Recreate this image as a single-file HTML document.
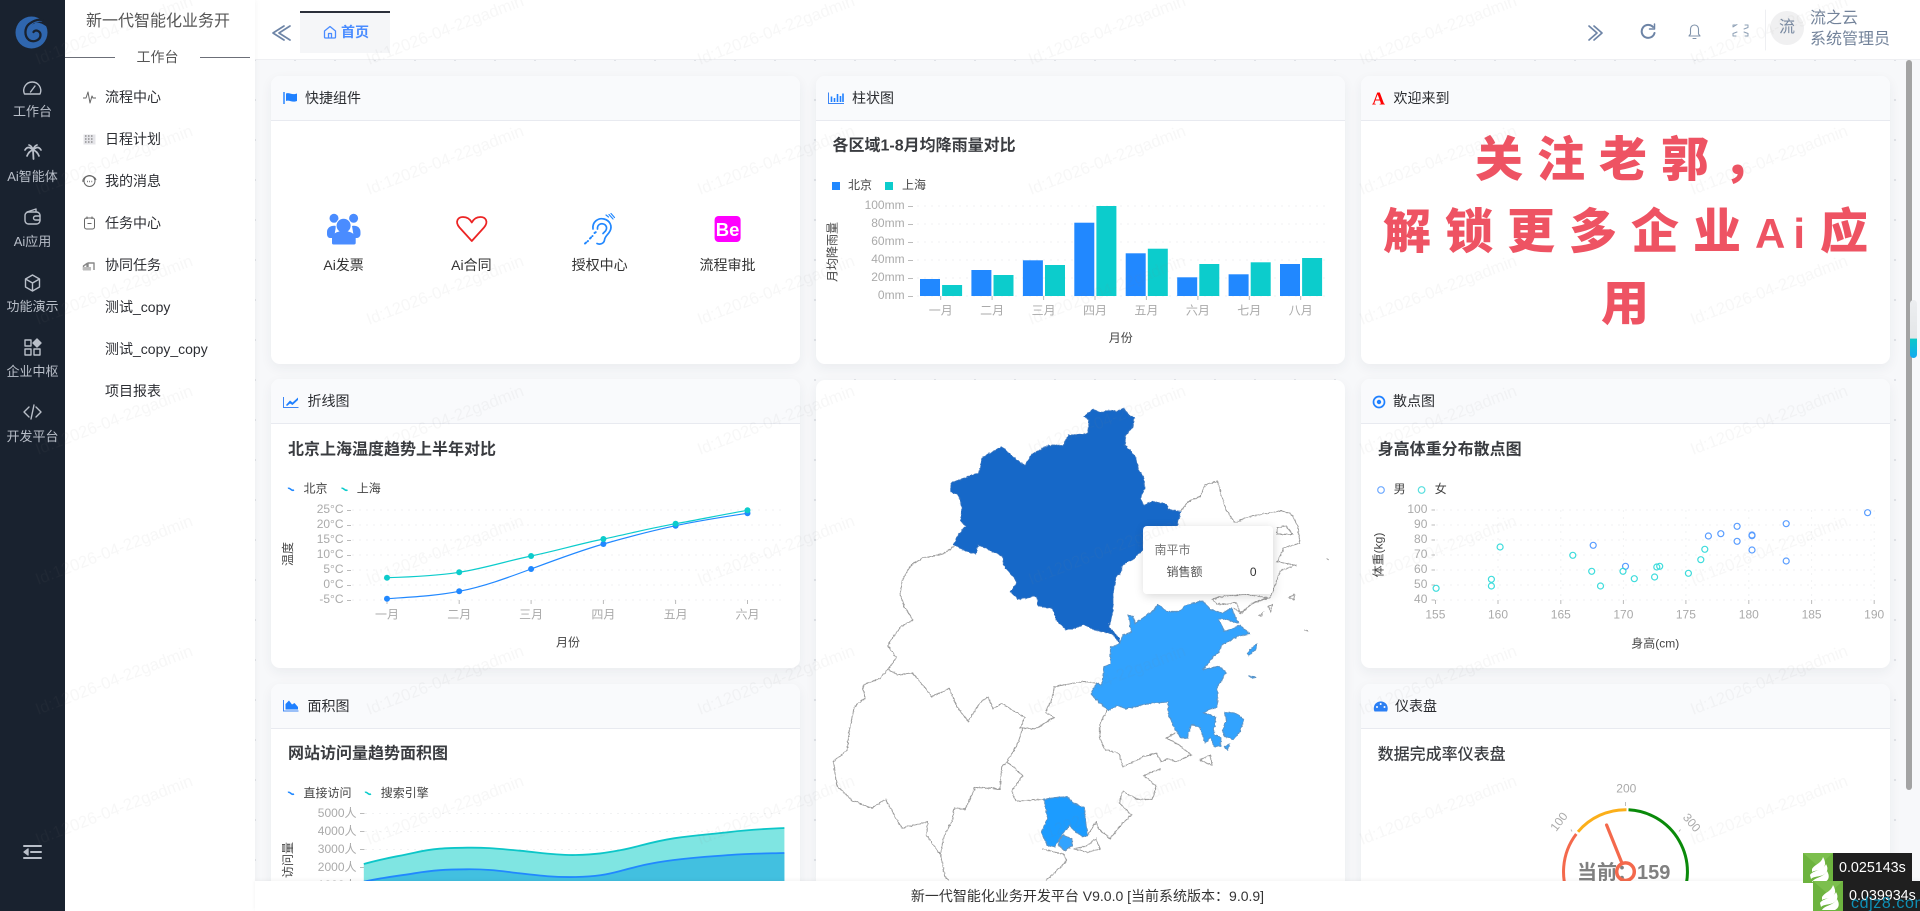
<!DOCTYPE html>
<html lang="zh-CN"><head><meta charset="utf-8"><title>工作台</title>
<style>
*{box-sizing:border-box}
html,body{margin:0;padding:0;width:1920px;height:911px;overflow:hidden}
body{position:relative;font-family:"Liberation Sans","Noto Sans CJK SC",sans-serif;background-color:#f7f8fa;background-image:radial-gradient(circle,#dfe1e6 1px,transparent 1.3px);background-size:40px 40px;background-position:-5px 0;color:#303133}
.abs{position:absolute}
#side{position:absolute;left:0;top:0;width:65px;height:911px;background:#19222f;color:#b9bfc9;font-size:13px;text-align:center;z-index:5}
#side .l{position:absolute;left:0;width:65px;line-height:18px;white-space:nowrap}
#sub{position:absolute;left:65px;top:0;width:190px;height:911px;background:#fff;z-index:4;box-shadow:1px 0 6px rgba(0,0,0,.04)}
#sub .i{position:absolute;left:40px;font-size:14px;line-height:20px;color:#2c2e33;white-space:nowrap}
#top{position:absolute;left:255px;top:0;width:1665px;height:60px;background:#fff;border-bottom:1px solid #eeeff2;z-index:3}
.card{position:absolute;width:529px;background:#fff;border-radius:9px;box-shadow:0 4px 12px rgba(40,50,70,.06);overflow:hidden}
.card .h{height:45px;background:#f9fafc;border-bottom:1px solid #e8eaf0;font-size:14px;line-height:44px;color:#2a2c30;white-space:nowrap}
#foot{position:absolute;left:255px;top:881px;width:1665px;height:30px;background:#fff;text-align:center;font-size:14px;line-height:30px;color:#333;z-index:6;box-shadow:0 -1px 4px rgba(0,0,0,.05)}
svg text{font-family:"Liberation Sans","Noto Sans CJK SC",sans-serif}
.y{font-size:12px;fill:#aaa;text-anchor:end;dominant-baseline:central}
.x{font-size:12px;fill:#aaa;text-anchor:middle;dominant-baseline:central}
.n{font-size:12px;fill:#444;text-anchor:middle;dominant-baseline:central}
.lg{font-size:12px;fill:#444;dominant-baseline:central}
.tt{font-size:16px;font-weight:700;fill:#3a3c40;dominant-baseline:central}
.ql{font-size:14px;fill:#333;text-anchor:middle;dominant-baseline:central}
.big{position:absolute;left:0;font-size:48px;font-weight:900;line-height:72px;color:#ee5363;letter-spacing:14px;white-space:nowrap}
.big span{font-size:42px}
.grid{stroke:#f1f2f3;stroke-width:1;stroke-dasharray:2 5;fill:none}
.tick{stroke:#bbb;stroke-width:1;fill:none}
.wm text{font-size:16.6px;fill:rgba(130,130,135,.065)}
.badge{position:absolute;height:30px;background:#1f1f1f;color:#fff;font-family:"Liberation Sans",sans-serif;font-size:14.3px;line-height:30px;white-space:nowrap;z-index:8}
</style></head><body>

<!-- left rail -->
<div id="side">
<svg class="abs" style="left:0;top:0" width="65" height="911" fill="none" stroke="#b9bfc9" stroke-width="1.4" stroke-linecap="round" stroke-linejoin="round">
 <circle cx="31.500" cy="32.500" r="16" fill="#2f66ae" stroke="none"/>
 <path d="M48 25 L42 20 C37 19 33 21 29 24 C24.500 28 24 36 29 40 C34 43 40.500 40 40.500 35 C40.500 31 35.500 29 33.500 32" stroke="#19222f" stroke-width="2.300"/>
 <path d="M44 22 C40 21 35 22 31 26 L34 23 C38 22 42 23 47 27 Z" fill="#19222f" stroke="none"/>
 <path d="M24.500 95 A8.5 8.5 0 1 1 40 95 Z" transform="translate(0,-1)"/><path d="M30.5 92 L35 86"/>
 <path d="M33 150 L33.500 159" stroke-width="1.800"/><path d="M33 150 Q28 145 25 150 M33 150 Q38 145 41 150 M33 150 Q29 151 27 156 M33 150 Q37 151 39 156 M33 150 Q32 146 29 145 M33 150 Q34 146 37 145" stroke-width="1.700"/>
 <rect x="25" y="212" width="15" height="12" rx="3.5"/><path d="M27 212 L36 209 V212 M40 216 H35.5 A2 2 0 0 0 35.5 220 H40"/>
 <path d="M32.5 275 L39.5 279 V287 L32.5 291 L25.5 287 V279 Z M25.5 279 L32.5 283 L39.5 279 M32.5 283 V291"/>
 <rect x="25" y="340" width="6" height="6"/><rect x="25" y="349" width="6" height="6"/><rect x="34" y="349" width="6" height="6"/><path d="M37 339 L41 343 L37 347 L33 343 Z" fill="#b9bfc9"/>
 <path d="M29 407 L24 412 L29 417 M36 407 L41 412 L36 417 M34 405 L31 419"/>
 <path d="M24 846 H41 M31 852 H41 M24 858 H41" stroke-width="2"/><path d="M28 849 L24 852 L28 855 Z" fill="#b9bfc9"/>
</svg>
<div class="l" style="top:103px">工作台</div>
<div class="l" style="top:168px">Ai智能体</div>
<div class="l" style="top:233px">Ai应用</div>
<div class="l" style="top:298px">功能演示</div>
<div class="l" style="top:363px">企业中枢</div>
<div class="l" style="top:428px">开发平台</div>
</div>

<!-- sub menu -->
<div id="sub">
<div class="abs" style="left:21px;top:10px;font-size:16px;line-height:24px;color:#555;white-space:nowrap">新一代智能化业务开</div>
<div class="abs" style="left:0;top:57px;width:50px;height:1px;background:#6c6f78"></div>
<div class="abs" style="left:135px;top:57px;width:50px;height:1px;background:#6c6f78"></div>
<div class="abs" style="left:50px;width:85px;top:47px;text-align:center;font-size:14px;line-height:20px;color:#555">工作台</div>
<div class="i" style="top:87px">流程中心</div>
<div class="i" style="top:129px">日程计划</div>
<div class="i" style="top:171px">我的消息</div>
<div class="i" style="top:213px">任务中心</div>
<div class="i" style="top:255px">协同任务</div>
<div class="i" style="top:297px">测试_copy</div>
<div class="i" style="top:339px">测试_copy_copy</div>
<div class="i" style="top:381px">项目报表</div>
<svg class="abs" style="left:0;top:0" width="60" height="300" fill="none" stroke="#666" stroke-width="1" stroke-linejoin="round">
 <path d="M18 98 H21 L23 92 L25 103 L27 96 L28 98 H31"/>
 <rect x="18.5" y="134.5" width="12" height="10" fill="#e4e4e8" stroke="none"/><path d="M20 136 H29 M20 139 H29 M20 142 H29" stroke-dasharray="1.5 1.5"/>
 <circle cx="24.5" cy="181" r="5.5"/><path d="M18 182 A6.5 5 0 0 1 31 180"/><path d="M22 181.5 H22.8 M24.2 181.5 H25 M26.4 181.5 H27.2" stroke-width="1.4"/>
 <rect x="19.5" y="218" width="10" height="11" rx="2"/><path d="M22 216.5 V219 M27 216.5 V219 M22.5 223.5 H26.5"/>
 <path d="M18.5 270 V266 L22 263.5 V270 M23 270 V263 H29 V270" stroke="#888" stroke-width="1.4"/><rect x="18" y="267" width="8" height="3.5" fill="#bbb" stroke="none"/>
</svg>
</div>

<!-- top bar -->
<div id="top">
<div class="abs" style="left:45px;top:11px;width:90px;height:42px;background:#f5f6f8;border-top:2px solid #2b2f3a"></div>
<div class="abs" style="left:86px;top:22px;font-size:14px;font-weight:700;line-height:20px;color:#4a8cff">首页</div>
<svg class="abs" style="left:0;top:0" width="1665" height="60" fill="none" stroke="#6d84a6" stroke-width="1.7" stroke-linecap="round" stroke-linejoin="round">
 <path d="M31 26 L20 33 L31 40" transform="translate(-2,0)" /><path d="M37 26 L26 33 L37 40" transform="translate(-2,0)"/>
 <path d="M69.500 31 L75 26.500 L80.500 31 V37 A1 1 0 0 1 79.500 38 H70.500 A1 1 0 0 1 69.500 37 Z M73.500 38 V33.500 H76.500 V38" stroke="#4a8cff" stroke-width="1.3"/>
 <path d="M1334 26 L1342 33 L1334 40 M1339 26 L1347 33 L1339 40"/>
 <path d="M1398 27 A6.500 6.500 0 1 0 1399.500 33" stroke-width="2"/><path d="M1399.500 24 V29 H1394.500" stroke-width="1.500"/>
 <path d="M1434 36 H1445 L1443.500 34 V29 A4 4 0 0 0 1435.500 29 V34 Z M1438 38.500 H1441" stroke-width="1.100" stroke="#8093ab"/>
 <path transform="translate(-2,0)" d="M1480 27 L1484 24.500 M1480 27 V25 M1480 25 H1483 M1495 25 H1492 M1495 25 V27.500 L1491 29 M1480 36 V33.500 L1484 32 M1480 36 H1483 M1495 36 H1492 M1495 36 V33.500 L1491 32" stroke-width="1" stroke="#8ea0b6"/>
 <path d="M1510.500 10 V50" stroke="#eeeff2" stroke-width="1"/>
</svg>
<div class="abs" style="left:1515px;top:11px;width:34px;height:34px;border-radius:50%;background:#f0f0f1;color:#7788a0;font-size:16px;line-height:34px;text-align:center">流</div>
<div class="abs" style="left:1555px;top:9px;font-size:16px;line-height:20.500px;color:#73839a;white-space:nowrap">流之云<br>系统管理员</div>
</div>

<!-- cards -->
<div class="card" style="left:271px;top:76px;height:288px"><div class="h" style="padding-left:34px">快捷组件</div></div>
<div class="card" style="left:816px;top:76px;height:288px"><div class="h" style="padding-left:36px">柱状图</div></div>
<div class="card" style="left:1361px;top:76px;height:288px"><div class="h" style="padding-left:32.500px">欢迎来到</div>
 <div class="big" style="top:49px;left:114px">关注老郭，</div>
 <div class="big" style="top:121px;left:22px">解锁更多企业<span style="letter-spacing:8px">A</span><span style="letter-spacing:15px">i</span>应</div>
 <div class="big" style="top:193px;left:240px">用</div>
</div>
<div class="card" style="left:271px;top:379px;height:289px"><div class="h" style="padding-left:36.500px">折线图</div></div>
<div class="card" style="left:271px;top:684px;height:227px"><div class="h" style="padding-left:36.500px">面积图</div></div>
<div class="card" style="left:816px;top:379.500px;height:531px"></div>
<div class="card" style="left:1361px;top:379px;height:289px"><div class="h" style="padding-left:32px">散点图</div></div>
<div class="card" style="left:1361px;top:684px;height:227px"><div class="h" style="padding-left:34px">仪表盘</div></div>

<!-- map -->
<svg class="abs" style="left:810px;top:375px" width="550" height="536" viewBox="0 0 1568 1568" preserveAspectRatio="none">
<defs><filter id="j" x="-3%" y="-3%" width="106%" height="106%"><feTurbulence type="turbulence" baseFrequency=".07" numOctaves="2" seed="5"/><feDisplacementMap in="SourceGraphic" scale="6" xChannelSelector="R" yChannelSelector="G"/></filter></defs>
<g filter="url(#j)" fill="none" stroke="#9c9c9c" stroke-width="1">
 <path vector-effect="non-scaling-stroke" d="M1055 398 L1075 370 L1110 355 L1125 320 L1160 310 L1170 345 L1185 395 L1210 430 L1260 410 L1300 405 L1340 395 L1370 405 L1390 440 L1395 490 L1350 505 L1330 545 L1385 555 L1340 570 L1310 650 L1260 665 L1230 695 L1205 680"/>
 <path vector-effect="non-scaling-stroke" d="M1330 445 L1355 440 L1375 465 L1330 465 Z M1145 655 L1185 645 L1240 640 L1300 650 L1255 670 L1225 695 L1215 665 L1160 670 Z M1280 700 L1290 695 L1285 705 Z M1305 675 L1318 670 L1312 690 Z M1365 650 L1380 640 L1378 655 Z M1470 534 L1478 540 M1408 745 L1418 748"/>
 <path vector-effect="non-scaling-stroke" d="M410 500 L380 520 L320 535 L290 550 L265 590 L255 640 L270 680 L292 715 L255 735 L220 790 L245 825 L220 860 L250 875 L290 870 L320 905 L345 940 L395 915 L415 965 L450 1012 L480 960 L505 940 L520 975 L545 960 L585 985 L612 1000 L598 1030 L640 1035 L695 1000 L670 985 L690 945 L695 910 L780 895 L815 900"/>
 <path vector-effect="non-scaling-stroke" d="M220 860 L200 885 L150 905 L155 945 L125 970 L110 1040 L105 1095 L65 1130 L75 1200 L120 1245 L175 1265 L215 1240 L260 1325 L335 1305 L330 1345 L370 1400 L380 1350 L405 1300 L410 1265 L440 1270 L470 1205 L540 1210 L545 1145 L560 1130 L590 1080 L605 1030"/>
 <path vector-effect="non-scaling-stroke" d="M845 980 L825 1020 L825 1060 L840 1095 L880 1105 L890 1145 L950 1115 L985 1105 L1000 1130 L1020 1120 L1040 1130 L1085 1110 L1050 1080 L1015 1060 L1040 1045"/>
 <path vector-effect="non-scaling-stroke" d="M560 1130 L605 1170 L575 1215 L585 1245 L665 1240"/>
 <path vector-effect="non-scaling-stroke" d="M790 1345 L815 1305 L820 1325 L855 1355 L880 1320 L915 1285 L880 1250 L890 1215 L930 1240 L975 1240 L985 1200 L950 1170 L1000 1150"/>
 <path vector-effect="non-scaling-stroke" d="M370 1400 L385 1470 L395 1478 M660 1385 L720 1400 L730 1420 L680 1470 L670 1478 M750 1385 L790 1375 L815 1355 L825 1385 L790 1395 Z M1110 1125 L1140 1110 L1145 1140 Z"/>
 <path vector-effect="non-scaling-stroke" fill="#1368c8" stroke="#2f6fbf" d="M780 120 L805 100 L830 108 L850 103 L875 105 L893 95 L905 115 L923 122 L918 150 L897 175 L897 205 L925 235 L935 275 L950 300 L952 330 L940 360 L950 380 L975 368 L1015 378 L1020 392 L1055 398 L1045 440 L1000 445 L948 445 L948 510 L915 540 L888 555 L885 578 L870 590 L862 640 L862 690 L850 735 L880 770 L880 782 L860 755 L815 745 L780 730 L730 745 L700 715 L690 680 L650 675 L645 645 L592 655 L570 632 L590 605 L550 555 L548 530 L520 515 L478 495 L472 522 L445 515 L410 495 L420 470 L443 440 L428 425 L432 385 L422 350 L400 340 L400 315 L425 305 L480 285 L490 240 L545 208 L610 265 L630 230 L680 205 L720 205 L735 175 L790 170 L795 130 Z"/>
 <path vector-effect="non-scaling-stroke" fill="#33a3fe" stroke="#5b93c4" d="M905 700 L920 705 L925 725 L975 690 L990 670 L1015 690 L1050 690 L1075 670 L1120 660 L1140 685 L1175 695 L1200 680 L1220 725 L1170 710 L1165 715 L1180 750 L1225 730 L1250 755 L1215 765 L1170 790 L1165 810 L1150 820 L1120 860 L1165 850 L1185 870 L1160 910 L1160 970 L1145 975 L1120 985 L1155 1000 L1150 1050 L1170 1060 L1170 1085 L1150 1085 L1140 1060 L1125 1075 L1110 1030 L1085 1020 L1075 1060 L1055 1060 L1040 1035 L1020 990 L1020 955 L960 960 L900 975 L875 965 L850 980 L825 960 L800 930 L815 900 L830 905 L838 850 L855 845 L855 795 L880 785 L890 760 L915 750 Z"/>
 <path vector-effect="non-scaling-stroke" fill="#33a3fe" stroke="#5b93c4" d="M1180 985 L1205 985 L1235 1005 L1225 1040 L1205 1065 L1180 1055 L1175 1035 L1185 1010 Z M1260 795 L1272 785 L1270 800 L1250 820 L1245 812 Z M1248 878 L1268 882 L1260 886 Z M1180 1085 L1195 1078 L1190 1096 Z"/>
 <path vector-effect="non-scaling-stroke" fill="#1e9cff" stroke="#5b93c4" d="M665 1240 L695 1235 L730 1232 L750 1250 L780 1265 L785 1310 L790 1345 L775 1350 L750 1330 L740 1315 L720 1340 L695 1380 L675 1375 L658 1335 L675 1300 L672 1270 Z"/>
 <path vector-effect="non-scaling-stroke" fill="#33a3fe" stroke="#6f93b5" d="M722 1345 L745 1355 L747 1375 L725 1390 L708 1375 L708 1358 Z"/>
</g>
</svg>
<div class="abs" style="left:1142.500px;top:526px;width:130px;height:68px;background:rgba(255,255,255,.97);border-radius:4px;box-shadow:1px 2px 10px rgba(0,0,0,.16);z-index:2">
 <div class="abs" style="left:12px;top:15px;font-size:12px;line-height:18px;color:#777">南平市</div>
 <div class="abs" style="left:24px;top:37px;font-size:12px;line-height:18px;color:#555">销售额</div>
 <div class="abs" style="right:16px;top:37px;font-size:12px;line-height:18px;color:#333">0</div>
</div>

<!-- charts and icons -->
<svg class="abs" style="left:0;top:0;z-index:1" width="1920" height="911">
<!-- header icons -->
<path d="M284 92 V104" stroke="#2a86ff" stroke-width="1.500"/><path d="M286 93.500 C289 92 292 95.500 297 93.500 V101 C292 103 289 99.500 286 101 Z" fill="#1f80ff"/>
<path d="M828.500 92.500 V103.500 H844" stroke="#3d86f5" fill="none"/><path d="M831.500 96.500 V102 M834.500 98 V102 M837.500 94 V102 M840.500 96 V102 M843 93.500 V102" stroke="#1f80ff" stroke-width="1.600"/>
<text x="1372" y="104.500" style="font-family:'Liberation Serif',serif;font-size:18px;font-weight:700" fill="#f00">A</text>
<path d="M283.500 397 V407.500 H298.500" stroke="#3d86f5" fill="none"/><path d="M286 405 L290 400.500 L292.500 402.500 L298 397.500 L298 400 L292.500 405 L290 403.500 L287 406 Z" fill="#1f80ff"/>
<path d="M283.500 700 V711 H298.500" stroke="#3d86f5" fill="none"/><path d="M285.500 709.500 V704 L289 700.500 L292 704.500 L294.500 703 L298 707 V709.500 Z" fill="#1f80ff"/>
<circle cx="1379" cy="402" r="5.500" fill="none" stroke="#1f80ff" stroke-width="1.700"/><circle cx="1379" cy="402" r="2.200" fill="#1f80ff"/>
<path d="M1374.500 711.500 A7 7 0 1 1 1387 711.500 Z" fill="#2a7ff5"/><circle cx="1377" cy="707" r="1" fill="#fff"/><circle cx="1380.700" cy="704" r="1" fill="#fff"/><circle cx="1384.500" cy="707" r="1" fill="#fff"/>

<!-- quick icons -->
<g fill="#4a8cff"><circle cx="334" cy="218.300" r="4.500"/><circle cx="353.600" cy="218.300" r="4.500"/><path d="M327 232 C327 227 332 225 336 226 L334 238 H330 C328 238 327 236 327 234 Z M360.500 232 C360.500 227 356 225 352 226 L354 238 H357 C359 238 360.500 236 360.500 234 Z"/><circle cx="343.600" cy="225.700" r="7.500" stroke="#fff"/><path d="M332 243 V238 C332 234 337 231 343.700 231 C350 231 355.700 234 355.700 238 V243 C355.700 244 355 244.500 354 244.500 H333.500 C332.500 244.500 332 244 332 243 Z"/></g>
<path d="M471.800 241 L459.500 227.500 C454.500 221.500 458 217 463 217 C467 217 470 219 471.800 222.500 C473.600 219 476.500 217 480.500 217 C485.500 217 489 221.500 484 227.500 Z" fill="none" stroke="#ec2424" stroke-width="1.800" stroke-linejoin="round"/>
<g fill="none" stroke="#2288ff" stroke-width="1.700" stroke-linecap="round"><path d="M593 229 C592 222 598 217.500 604 219 C610 220.500 612.500 226 610 231 C608 235 605 236 604.500 240 C604 243.500 600 245 597 243.500"/><path d="M597.500 229 C597 225 600.500 223 603.500 224 C606.500 225 607.500 228 605.500 231 L603 233.500"/><path d="M606 215 L608.500 217 M609 214.500 L613 219 M611 213.500 L614.500 217.500" stroke-width="1.200"/><path d="M585 243.500 L588 241 M590 238.500 L592.500 236 M594.500 233 L596 232" stroke-width="2" stroke-dasharray="1.500 2"/></g>
<rect x="714.600" y="216" width="26" height="26" rx="4" fill="#ff00ff"/><text x="727.600" y="229.500" text-anchor="middle" dominant-baseline="central" style="font-size:18.500px;font-weight:700" fill="#fff">Be</text>
<text class="ql" x="343.600" y="265">Ai发票</text><text class="ql" x="471.400" y="265">Ai合同</text><text class="ql" x="599.600" y="265">授权中心</text><text class="ql" x="727.500" y="265">流程审批</text>

<!-- bar -->
<text class="tt" x="832.500" y="146">各区域1-8月均降雨量对比</text>
<rect x="832" y="182" width="8" height="8" fill="#2188ff"/><text class="lg" x="848" y="185">北京</text>
<rect x="885" y="182" width="8" height="8" fill="#0ccccc"/><text class="lg" x="902" y="185">上海</text>
<path class="grid" d="M917 206 H1330 M917 224 H1330 M917 242 H1330 M917 260 H1330 M917 278 H1330 M917 296 H1330"/>
<path class="tick" d="M908 206.500 H913 M908 224.500 H913 M908 242.500 H913 M908 260.500 H913 M908 278.500 H913 M908 296.500 H913 M940.700 296 V300 M992.100 296 V300 M1043.600 296 V300 M1095 296 V300 M1146.400 296 V300 M1197.900 296 V300 M1249.300 296 V300 M1300.700 296 V300"/>
<text class="y" x="904.600" y="205">100mm</text><text class="y" x="904.600" y="223">80mm</text><text class="y" x="904.600" y="241">60mm</text><text class="y" x="904.600" y="259">40mm</text><text class="y" x="904.600" y="277">20mm</text><text class="y" x="904.600" y="295">0mm</text>
<g fill="#2188ff"><rect x="920" y="279" width="20" height="17"/><rect x="971.400" y="270" width="20" height="26"/><rect x="1022.900" y="260.300" width="20" height="35.700"/><rect x="1074.300" y="222.700" width="20" height="73.300"/><rect x="1125.700" y="253.300" width="20" height="42.700"/><rect x="1177.200" y="277.300" width="20" height="18.700"/><rect x="1228.600" y="274.300" width="20" height="21.700"/><rect x="1280" y="264" width="20" height="32"/></g>
<g fill="#0ccccc"><rect x="942.100" y="285" width="20" height="11"/><rect x="993.500" y="275" width="20" height="21"/><rect x="1045" y="265" width="20" height="31"/><rect x="1096.400" y="206" width="20" height="90"/><rect x="1147.800" y="248.700" width="20" height="47.300"/><rect x="1199.300" y="264" width="20" height="32"/><rect x="1250.700" y="262.300" width="20" height="33.700"/><rect x="1302.100" y="258" width="20" height="38"/></g>
<g class="xg"><text class="x" x="940.700" y="310.700">一月</text><text class="x" x="992.100" y="310.700">二月</text><text class="x" x="1043.600" y="310.700">三月</text><text class="x" x="1095" y="310.700">四月</text><text class="x" x="1146.400" y="310.700">五月</text><text class="x" x="1197.900" y="310.700">六月</text><text class="x" x="1249.300" y="310.700">七月</text><text class="x" x="1300.700" y="310.700">八月</text></g>
<text class="n" x="1120.700" y="338">月份</text><text class="n" transform="rotate(-90 832.500 252)" x="832.500" y="252">月均降雨量</text>

<!-- line -->
<text class="tt" x="288" y="450">北京上海温度趋势上半年对比</text>
<path d="M288 488.500 C290 487 291 491.500 294 490" fill="none" stroke="#2188ff" stroke-width="1.600"/><text class="lg" x="303.500" y="488.700">北京</text>
<path d="M341.500 488.500 C343.500 487 344.500 491.500 347.500 490" fill="none" stroke="#0ccccc" stroke-width="1.600"/><text class="lg" x="356.800" y="488.700">上海</text>
<path class="grid" d="M352 510 H783 M352 525 H783 M352 540 H783 M352 555 H783 M352 570 H783 M352 585 H783 M352 600 H783"/>
<path class="tick" d="M347 510.500 H351 M347 525.500 H351 M347 540.500 H351 M347 555.500 H351 M347 570.500 H351 M347 585.500 H351 M347 600.500 H351 M387 600 V604 M459.200 600 V604 M531.100 600 V604 M603.400 600 V604 M675.600 600 V604 M747.500 600 V604"/>
<text class="y" x="343.500" y="509">25°C</text><text class="y" x="343.500" y="524">20°C</text><text class="y" x="343.500" y="539">15°C</text><text class="y" x="343.500" y="554">10°C</text><text class="y" x="343.500" y="569">5°C</text><text class="y" x="343.500" y="584">0°C</text><text class="y" x="343.500" y="599">-5°C</text>
<path d="M387 598.700 C411 597,435 596,459.200 591.300 S507 578,531.100 569 S579 551,603.400 544 S651 531,675.600 525.700 S723 517,747.500 513.300" fill="none" stroke="#2188ff" stroke-width="1.200"/>
<path d="M387 577.700 C411 577,435 576,459.200 572.300 S507 561,531.100 556 S579 544,603.400 539 S651 528,675.600 523.700 S723 514.500,747.500 510.300" fill="none" stroke="#0ccccc" stroke-width="1.200"/>
<g fill="#2188ff"><circle cx="387" cy="598.700" r="3"/><circle cx="459.200" cy="591.300" r="3"/><circle cx="531.100" cy="569" r="3"/><circle cx="603.400" cy="544" r="3"/><circle cx="675.600" cy="525.700" r="3"/><circle cx="747.500" cy="513.300" r="3"/></g>
<g fill="#0ccccc"><circle cx="387" cy="577.700" r="3"/><circle cx="459.200" cy="572.300" r="3"/><circle cx="531.100" cy="556" r="3"/><circle cx="603.400" cy="539" r="3"/><circle cx="675.600" cy="523.700" r="3"/><circle cx="747.500" cy="510.300" r="3"/></g>
<text class="x" x="387" y="614.300">一月</text><text class="x" x="459.200" y="614.300">二月</text><text class="x" x="531.100" y="614.300">三月</text><text class="x" x="603.400" y="614.300">四月</text><text class="x" x="675.600" y="614.300">五月</text><text class="x" x="747.500" y="614.300">六月</text>
<text class="n" x="568" y="642.300">月份</text><text class="n" transform="rotate(-90 288 554)" x="288" y="554">温度</text>

<!-- area -->
<text class="tt" x="288" y="754">网站访问量趋势面积图</text>
<path d="M288 792.500 C290 791 291 795.500 294 794" fill="none" stroke="#2188ff" stroke-width="1.600"/><text class="lg" x="303.500" y="793">直接访问</text>
<path d="M365 792.500 C367 791 368 795.500 371 794" fill="none" stroke="#0ccccc" stroke-width="1.600"/><text class="lg" x="380.700" y="793">搜索引擎</text>
<path class="grid" d="M365 813.500 H784 M365 831.500 H784 M365 849.500 H784"/>
<path class="tick" d="M360 813.500 H364.500 M360 831.500 H364.500 M360 849.500 H364.500 M360 867.500 H364.500"/>
<text class="y" x="356.500" y="813">5000人</text><text class="y" x="356.500" y="831">4000人</text><text class="y" x="356.500" y="849">3000人</text><text class="y" x="356.500" y="867">2000人</text><text class="y" x="356.500" y="885">1000人</text>
<path d="M363.800 864 C385 858,395 857,414.300 852.700 S445 848,467 847.700 S500 849,519.600 850.700 S555 855.500,575.700 855 S605 853,621.300 850 S650 842,673.900 838.300 S710 834.500,730 832 S765 829,784.400 828 V900 H363.800 Z" fill="#7fe5e2"/>
<path d="M363.800 881.700 C385 877,395 876.500,414.300 873.300 S445 869.500,467 869.300 S500 871,519.600 873.300 S555 877.500,575.700 877 S605 875,621.300 870.700 S650 863,673.900 860 S710 856.500,730 855 S765 853.500,784.400 853 V900 H363.800 Z" fill="#42c0e0"/>
<path d="M363.800 864 C385 858,395 857,414.300 852.700 S445 848,467 847.700 S500 849,519.600 850.700 S555 855.500,575.700 855 S605 853,621.300 850 S650 842,673.900 838.300 S710 834.500,730 832 S765 829,784.400 828" fill="none" stroke="#0cc6c8" stroke-width="1.800"/>
<path d="M363.800 881.700 C385 877,395 876.500,414.300 873.300 S445 869.500,467 869.300 S500 871,519.600 873.300 S555 877.500,575.700 877 S605 875,621.300 870.700 S650 863,673.900 860 S710 856.500,730 855 S765 853.500,784.400 853" fill="none" stroke="#2188ff" stroke-width="1.800"/>
<text class="n" transform="rotate(-90 288 860)" x="288" y="860">访问量</text>

<!-- scatter -->
<text class="tt" x="1377.600" y="450">身高体重分布散点图</text>
<circle cx="1381" cy="490" r="3.300" fill="none" stroke="#6faaff" stroke-width="1.200"/><text class="lg" x="1393.600" y="489">男</text>
<circle cx="1421.600" cy="490" r="3.300" fill="none" stroke="#58dfdf" stroke-width="1.200"/><text class="lg" x="1434.700" y="489">女</text>
<path class="grid" d="M1436 510 H1875 M1436 525 H1875 M1436 540 H1875 M1436 555 H1875 M1436 570 H1875 M1436 585 H1875 M1436 600 H1875 M1498 510 V600 M1560.800 510 V600 M1623.400 510 V600 M1685.900 510 V600 M1748.800 510 V600 M1811.600 510 V600 M1874.200 510 V600"/>
<path class="tick" d="M1431.500 510 H1435 M1431.500 525 H1435 M1431.500 540 H1435 M1431.500 555 H1435 M1431.500 570 H1435 M1431.500 585 H1435 M1431.500 600 H1435 M1435.500 600 V604 M1498 600 V604 M1560.800 600 V604 M1623.400 600 V604 M1685.900 600 V604 M1748.800 600 V604 M1811.600 600 V604 M1874.200 600 V604"/>
<text class="y" x="1427.400" y="509">100</text><text class="y" x="1427.400" y="524">90</text><text class="y" x="1427.400" y="539">80</text><text class="y" x="1427.400" y="554">70</text><text class="y" x="1427.400" y="569">60</text><text class="y" x="1427.400" y="584">50</text><text class="y" x="1427.400" y="599">40</text>
<text class="x" x="1435.400" y="614.700">155</text><text class="x" x="1498" y="614.700">160</text><text class="x" x="1560.800" y="614.700">165</text><text class="x" x="1623.400" y="614.700">170</text><text class="x" x="1685.900" y="614.700">175</text><text class="x" x="1748.800" y="614.700">180</text><text class="x" x="1811.600" y="614.700">185</text><text class="x" x="1874.200" y="614.700">190</text>
<text class="n" x="1655.300" y="643.300">身高(cm)</text><text class="n" transform="rotate(-90 1378.400 555)" x="1378.400" y="555">体重(kg)</text>
<g fill="none" stroke="#3d8cff" stroke-width="1.200" opacity=".85"><circle cx="1593.200" cy="545.300" r="3"/><circle cx="1625.500" cy="566.300" r="3"/><circle cx="1708.400" cy="536" r="3"/><circle cx="1720.800" cy="533.700" r="3"/><circle cx="1737.100" cy="526.300" r="3"/><circle cx="1737.100" cy="541.300" r="3"/><circle cx="1752" cy="535" r="3"/><circle cx="1752" cy="535.700" r="3"/><circle cx="1752" cy="550" r="3"/><circle cx="1786.200" cy="523.700" r="3"/><circle cx="1786.200" cy="561" r="3"/><circle cx="1867.600" cy="512.700" r="3"/></g>
<g fill="none" stroke="#1cd6d6" stroke-width="1.200" opacity=".85"><circle cx="1436.100" cy="588.300" r="3"/><circle cx="1491.400" cy="579.300" r="3"/><circle cx="1491.400" cy="586" r="3"/><circle cx="1500.100" cy="547" r="3"/><circle cx="1572.800" cy="555.300" r="3"/><circle cx="1591.700" cy="571.300" r="3"/><circle cx="1600.500" cy="586" r="3"/><circle cx="1623" cy="571.300" r="3"/><circle cx="1634.300" cy="578.700" r="3"/><circle cx="1654.600" cy="577" r="3"/><circle cx="1656.800" cy="567" r="3"/><circle cx="1659.700" cy="566.300" r="3"/><circle cx="1688.400" cy="573.300" r="3"/><circle cx="1700.800" cy="559.700" r="3"/><circle cx="1704.800" cy="549.300" r="3"/></g>

<!-- gauge -->
<text class="tt" style="font-weight:500" x="1377.600" y="755">数据完成率仪表盘</text>
<text class="x" x="1626.300" y="788.300">200</text>
<text class="x" transform="rotate(-53 1559 821.700)" x="1559" y="821.700">100</text>
<text class="x" transform="rotate(50 1691.700 822.700)" x="1691.700" y="822.700">300</text>
<path class="tick" d="M1625.500 802 V806 M1571 829.500 L1572 831.500 M1680.500 829.500 L1679 831.500"/>
<path d="M1576.300 834 A62 62 0 0 0 1570.800 900.800" fill="none" stroke="#f4694c" stroke-width="3"/>
<path d="M1578 831.800 A62 62 0 0 1 1626.500 809.700" fill="none" stroke="#fbaf1a" stroke-width="3"/>
<path d="M1628.500 809.800 A62 62 0 0 1 1680.200 900.800" fill="none" stroke="#0a8a0a" stroke-width="3"/>
<text x="1577" y="873" dominant-baseline="central" style="font-size:20px;font-weight:700" fill="#808080">当前：159</text>
<path d="M1606.600 825 L1621.500 862" stroke="#f4694c" stroke-width="3.200" stroke-linecap="round"/>
<circle cx="1625.500" cy="871.700" r="8.800" fill="none" stroke="#f4694c" stroke-width="3.500"/>
</svg>

<!-- footer -->
<div id="foot">新一代智能化业务开发平台 V9.0.0 [当前系统版本：9.0.9]</div>

<!-- scrollbars -->
<div class="abs" style="left:1906px;top:60px;width:6px;height:730px;background:#a3a3a3;border-radius:3px;z-index:5"></div>
<div class="abs" style="left:1910px;top:300px;width:7px;height:58px;border-radius:4px;background:linear-gradient(#eceef0 0,#e4e6e8 66%,#0cc8c8 67%,#13aaf0 100%);z-index:5"></div>

<!-- perf badges -->
<div class="badge" style="left:1803px;top:853px;width:109px;padding-left:36px">0.025143s</div>
<div class="badge" style="left:1813px;top:881px;width:107px;padding-left:36px;z-index:9">0.039934s</div>
<svg class="abs" style="left:1803px;top:853px;z-index:8" width="30" height="30"><rect width="30" height="30" fill="#6db33f"/><path d="M0 0 L15 13 L30 0 Z" fill="#7cbf4d"/><g fill="#fff"><path d="M9 16 C12 11 18 11 20 4 C23 9 23 13 19 16 C16 18 12 17 9 19 Z"/><path d="M7 22 C10 17 20 18 23 11 C26 16 24 20 20 22 C16 24 11 23 8 26 Z"/><path d="M9 29 C12 24 20 25 24 18 C27 23 26 27 22 29 Z"/></g></svg>
<svg class="abs" style="left:1813px;top:881px;z-index:9" width="30" height="30"><rect width="30" height="30" fill="#6db33f"/><path d="M0 0 L15 13 L30 0 Z" fill="#7cbf4d"/><g fill="#fff"><path d="M9 16 C12 11 18 11 20 4 C23 9 23 13 19 16 C16 18 12 17 9 19 Z"/><path d="M7 22 C10 17 20 18 23 11 C26 16 24 20 20 22 C16 24 11 23 8 26 Z"/><path d="M9 29 C12 24 20 25 24 18 C27 23 26 27 22 29 Z"/></g></svg>
<div class="abs" style="left:1851px;top:895px;width:69px;height:16px;overflow:hidden;font-size:16px;line-height:18px;letter-spacing:.6px;color:#0e8fb5;z-index:10;white-space:nowrap">cdjz8.com</div>

<!-- watermark -->
<svg class="abs wm" style="left:0;top:0;z-index:7;pointer-events:none" width="1920" height="911">
<text x="38" y="65" transform="rotate(-21 38 65)">Id:12026-04-22gadmin</text><text x="369" y="65" transform="rotate(-21 369 65)">Id:12026-04-22gadmin</text><text x="700" y="65" transform="rotate(-21 700 65)">Id:12026-04-22gadmin</text><text x="1031" y="65" transform="rotate(-21 1031 65)">Id:12026-04-22gadmin</text><text x="1362" y="65" transform="rotate(-21 1362 65)">Id:12026-04-22gadmin</text><text x="1693" y="65" transform="rotate(-21 1693 65)">Id:12026-04-22gadmin</text>
<text x="38" y="195" transform="rotate(-21 38 195)">Id:12026-04-22gadmin</text><text x="369" y="195" transform="rotate(-21 369 195)">Id:12026-04-22gadmin</text><text x="700" y="195" transform="rotate(-21 700 195)">Id:12026-04-22gadmin</text><text x="1031" y="195" transform="rotate(-21 1031 195)">Id:12026-04-22gadmin</text><text x="1362" y="195" transform="rotate(-21 1362 195)">Id:12026-04-22gadmin</text><text x="1693" y="195" transform="rotate(-21 1693 195)">Id:12026-04-22gadmin</text>
<text x="38" y="325" transform="rotate(-21 38 325)">Id:12026-04-22gadmin</text><text x="369" y="325" transform="rotate(-21 369 325)">Id:12026-04-22gadmin</text><text x="700" y="325" transform="rotate(-21 700 325)">Id:12026-04-22gadmin</text><text x="1031" y="325" transform="rotate(-21 1031 325)">Id:12026-04-22gadmin</text><text x="1362" y="325" transform="rotate(-21 1362 325)">Id:12026-04-22gadmin</text><text x="1693" y="325" transform="rotate(-21 1693 325)">Id:12026-04-22gadmin</text>
<text x="38" y="455" transform="rotate(-21 38 455)">Id:12026-04-22gadmin</text><text x="369" y="455" transform="rotate(-21 369 455)">Id:12026-04-22gadmin</text><text x="700" y="455" transform="rotate(-21 700 455)">Id:12026-04-22gadmin</text><text x="1031" y="455" transform="rotate(-21 1031 455)">Id:12026-04-22gadmin</text><text x="1362" y="455" transform="rotate(-21 1362 455)">Id:12026-04-22gadmin</text><text x="1693" y="455" transform="rotate(-21 1693 455)">Id:12026-04-22gadmin</text>
<text x="38" y="585" transform="rotate(-21 38 585)">Id:12026-04-22gadmin</text><text x="369" y="585" transform="rotate(-21 369 585)">Id:12026-04-22gadmin</text><text x="700" y="585" transform="rotate(-21 700 585)">Id:12026-04-22gadmin</text><text x="1031" y="585" transform="rotate(-21 1031 585)">Id:12026-04-22gadmin</text><text x="1362" y="585" transform="rotate(-21 1362 585)">Id:12026-04-22gadmin</text><text x="1693" y="585" transform="rotate(-21 1693 585)">Id:12026-04-22gadmin</text>
<text x="38" y="715" transform="rotate(-21 38 715)">Id:12026-04-22gadmin</text><text x="369" y="715" transform="rotate(-21 369 715)">Id:12026-04-22gadmin</text><text x="700" y="715" transform="rotate(-21 700 715)">Id:12026-04-22gadmin</text><text x="1031" y="715" transform="rotate(-21 1031 715)">Id:12026-04-22gadmin</text><text x="1362" y="715" transform="rotate(-21 1362 715)">Id:12026-04-22gadmin</text><text x="1693" y="715" transform="rotate(-21 1693 715)">Id:12026-04-22gadmin</text>
<text x="38" y="845" transform="rotate(-21 38 845)">Id:12026-04-22gadmin</text><text x="369" y="845" transform="rotate(-21 369 845)">Id:12026-04-22gadmin</text><text x="700" y="845" transform="rotate(-21 700 845)">Id:12026-04-22gadmin</text><text x="1031" y="845" transform="rotate(-21 1031 845)">Id:12026-04-22gadmin</text><text x="1362" y="845" transform="rotate(-21 1362 845)">Id:12026-04-22gadmin</text><text x="1693" y="845" transform="rotate(-21 1693 845)">Id:12026-04-22gadmin</text>
</svg>
</body></html>
